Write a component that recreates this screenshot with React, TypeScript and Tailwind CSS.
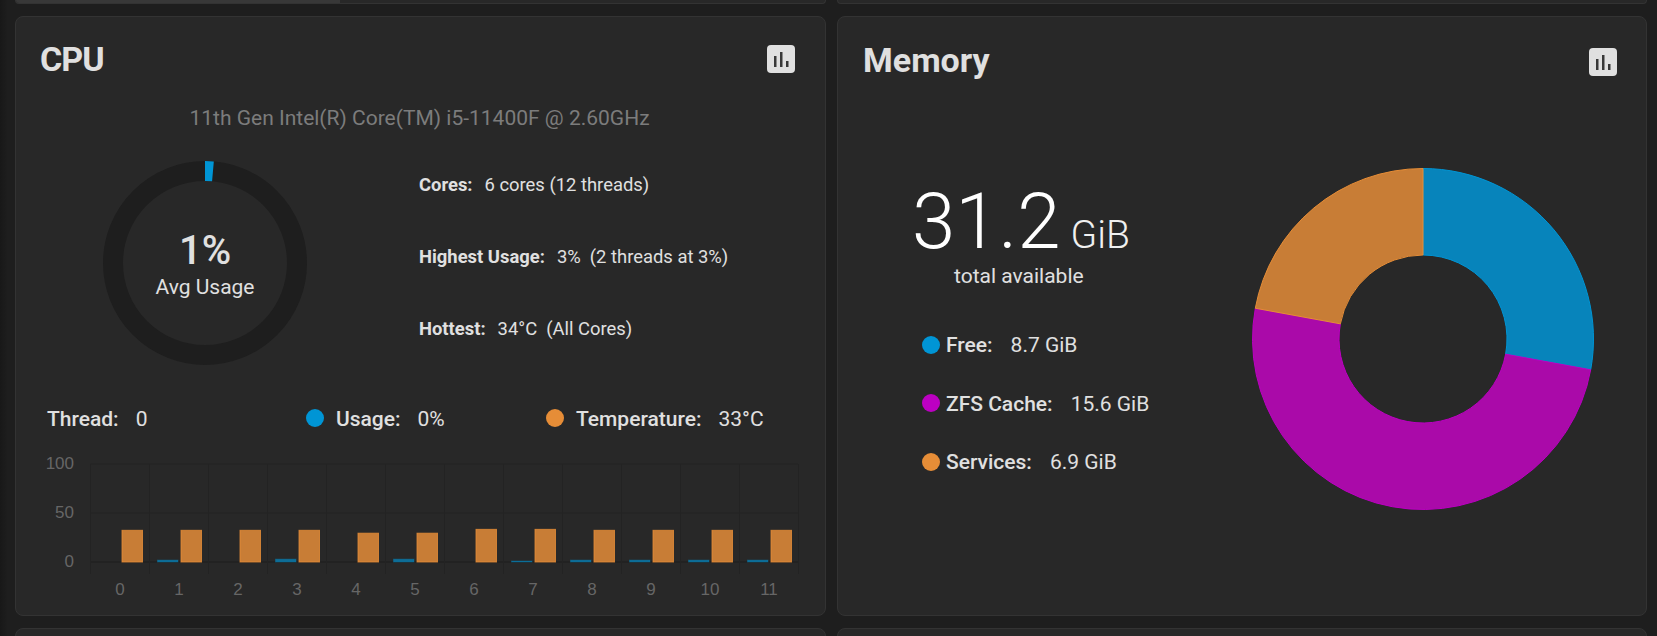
const threads = [
  { usage: 0, temp: 33 },
  { usage: 2, temp: 33 },
  { usage: 0, temp: 33 },
  { usage: 3, temp: 33 },
  { usage: 0, temp: 30 },
  { usage: 3, temp: 30 },
  { usage: 0, temp: 34 },
  { usage: 1, temp: 34 },
  { usage: 2, temp: 33 },
  { usage: 2, temp: 33 },
  { usage: 2, temp: 33 },
  { usage: 2, temp: 33 },
];

function ReportsButton() {
  return (
    <button className="w-[28px] h-[28px] rounded-[4px] bg-[#e0e0e0] flex items-center justify-center shrink-0">
      <svg width="28" height="28" viewBox="0 0 28 28">
        <rect x="7" y="11" width="2.5" height="11" fill="#383838" />
        <rect x="13" y="7" width="2.5" height="15" fill="#383838" />
        <rect x="19" y="16" width="2.5" height="6" fill="#383838" />
      </svg>
    </button>
  );
}

function Gauge() {
  const r = 92;
  const c = 2 * Math.PI * r;
  return (
    <div className="relative w-[204px] h-[204px] shrink-0 ml-[63px]">
      <svg width="204" height="204" viewBox="0 0 204 204">
        <circle cx="102" cy="102" r={r} fill="none" stroke="#1e1e1e" strokeWidth="20" />
        <circle
          cx="102"
          cy="102"
          r={r}
          fill="none"
          stroke="#0095d5"
          strokeWidth="20"
          strokeDasharray={`${c * 0.014} ${c}`}
          transform="rotate(-90 102 102)"
        />
      </svg>
      <div className="absolute inset-0 flex flex-col items-center justify-center text-[#e0e0e0] pt-[3px]">
        <div className="text-[40px] leading-[44px] font-medium">1%</div>
        <div className="text-[21px] leading-[26px] mt-[1px]">Avg Usage</div>
      </div>
    </div>
  );
}

function Stat({ label, value }: { label: string; value: string }) {
  return (
    <div className="h-[24px] leading-[24px] text-[18.4px] text-[#e0e0e0] whitespace-pre">
      <span className="font-bold">{label}</span>
      <span className="ml-[12px]">{value}</span>
    </div>
  );
}

function ThreadChart() {
  const left = 90.5;
  const step = 59;
  const y0 = 562;
  const scale = 0.96;
  return (
    <svg className="block -ml-[24px]" width="808" height="165" viewBox="16 450 808 165">
      {[464, 513, 562].map((y) => (
        <line key={y} x1={left} x2={798} y1={y} y2={y} stroke={y === 562 ? "#1c1c1c" : "#232323"} />
      ))}
      {Array.from({ length: 13 }).map((_, i) => (
        <line key={i} x1={left + i * step} x2={left + i * step} y1={464} y2={574} stroke="#232323" />
      ))}
      {[
        ["100", 464],
        ["50", 513],
        ["0", 562],
      ].map(([t, y]) => (
        <text key={t} x={74} y={Number(y) + 5} textAnchor="end" fontSize="17" fill="#666666" fontFamily="Liberation Sans">
          {t}
        </text>
      ))}
      {threads.map((t, i) => {
        const x = left + i * step;
        const uh = t.usage * scale;
        const th = t.temp * scale;
        return (
          <g key={i}>
            {t.usage > 0 && (
              <rect x={x + 8} y={y0 - uh} width={20.5} height={uh} fill="#0784bb" opacity="0.75" stroke="#0095d5" strokeOpacity="0.4" strokeWidth="1" />
            )}
            <rect x={x + 31.5} y={y0 - th} width={20.5} height={th} fill="#c87d36" stroke="#e68d37" strokeOpacity="0.8" strokeWidth="1" />
            <text x={x + 29.5} y={595} textAnchor="middle" fontSize="17" fill="#666666" fontFamily="Liberation Sans">
              {i}
            </text>
          </g>
        );
      })}
    </svg>
  );
}

function CpuCard() {
  return (
    <div className="h-[600px] rounded-[8px] border border-[#333333] bg-[#282828] px-[24px] pt-[28px] overflow-hidden">
      <div className="flex items-center justify-between h-[28px] pr-[6px]">
        <h2 className="text-[34px] font-bold leading-[28px] tracking-[-1px] text-[#e0e0e0]">CPU</h2>
        <ReportsButton />
      </div>
      <div className="mt-[33px] h-[24px] leading-[24px] text-center text-[21px] text-[#7c7c7c] pr-[2px]">
        11th Gen Intel(R) Core(TM) i5-11400F @ 2.60GHz
      </div>
      <div className="mt-[31px] flex h-[204px]">
        <Gauge />
        <div className="ml-[112px] pt-[12px] flex flex-col gap-[48px]">
          <Stat label="Cores:" value="6 cores (12 threads)" />
          <Stat label="Highest Usage:" value={"3%  (2 threads at 3%)"} />
          <Stat label="Hottest:" value={"34°C  (All Cores)"} />
        </div>
      </div>
      <div className="mt-[43px] flex items-center h-[24px] text-[21px] text-[#e0e0e0] whitespace-pre">
        <span className="ml-[7px] w-[259px]">
          <span className="font-medium">Thread:</span>
          <span className="ml-[17px]">0</span>
        </span>
        <span className="w-[18px] h-[18px] rounded-full bg-[#0095d5] mb-[4px]" />
        <span className="ml-[12px] w-[210px]">
          <span className="font-medium">Usage:</span>
          <span className="ml-[17px]">0%</span>
        </span>
        <span className="w-[18px] h-[18px] rounded-full bg-[#e68d37] mb-[4px]" />
        <span className="ml-[12px]">
          <span className="font-medium">Temperature:</span>
          <span className="ml-[17px]">33°C</span>
        </span>
      </div>
      <div className="mt-[18px]">
        <ThreadChart />
      </div>
    </div>
  );
}

function polar(r: number, deg: number) {
  const a = ((deg - 90) * Math.PI) / 180;
  return `${171 + r * Math.cos(a)} ${171 + r * Math.sin(a)}`;
}

function slice(from: number, to: number) {
  const large = to - from > 180 ? 1 : 0;
  return `M${polar(170.5, from)} A170.5 170.5 0 ${large} 1 ${polar(170.5, to)} L${polar(84, to)} A84 84 0 ${large} 0 ${polar(84, from)} Z`;
}

const memory = [
  { label: "Free:", value: "8.7 GiB", dot: "bg-[#0095d5]" },
  { label: "ZFS Cache:", value: "15.6 GiB", dot: "bg-[#bc00c2]" },
  { label: "Services:", value: "6.9 GiB", dot: "bg-[#e68d37]" },
];

function MemoryCard() {
  return (
    <div className="h-[600px] rounded-[8px] border border-[#333333] bg-[#282828] px-[25px] pt-[31px] overflow-hidden">
      <div className="flex items-center justify-between h-[28px] pr-[4px]">
        <h2 className="text-[34px] font-bold leading-[28px] text-[#e0e0e0] -mt-[4px]">Memory</h2>
        <ReportsButton />
      </div>
      <div className="flex mt-[116px]">
        <div className="w-[300px] shrink-0 pl-[59px]">
          <div className="flex items-baseline whitespace-pre text-white font-light h-[60px] leading-[60px]">
            <span className="text-[78px] -ml-[10px]">31.2</span>
            <span className="text-[39px] ml-[10px] text-[#f0f0f0]">GiB</span>
          </div>
          <div className="mt-[12px] h-[24px] leading-[24px] text-[21px] text-[#e0e0e0] ml-[32px]">total available</div>
          <div className="mt-[46px] flex flex-col gap-[34.5px]">
            {memory.map((m) => (
              <div key={m.label} className="flex items-center h-[24px] text-[21px] text-[#e0e0e0] whitespace-pre">
                <span className={`w-[18px] h-[18px] rounded-full ${m.dot} mb-[3px]`} />
                <span className="ml-[6px] font-medium">{m.label}</span>
                <span className="ml-[18px]">{m.value}</span>
              </div>
            ))}
          </div>
        </div>
        <svg className="ml-[89px] -mt-[24px] shrink-0" width="342" height="342" viewBox="0 0 342 342">
          <path d={slice(0, 100.4)} fill="#0784bb" stroke="#0095d5" strokeWidth="1" />
          <path d={slice(100.4, 280.4)} fill="#aa0aa9" stroke="#bc00c2" strokeWidth="1" />
          <path d={slice(280.4, 360)} fill="#c87d36" stroke="#e68d37" strokeWidth="1" />
        </svg>
      </div>
    </div>
  );
}

export default function App() {
  return (
    <div className="relative w-[1657px] h-[636px] overflow-hidden bg-[#1e1e1e] font-['Roboto',sans-serif]">
      <div className="grid grid-cols-[811px_810px] gap-x-[11px] gap-y-[12px] pl-[15px]">
        <div className="h-[4px] rounded-b-[8px] border border-t-0 border-[#333333] bg-[#282828] overflow-hidden">
          <div className="h-full w-[324px] bg-[#383838]" />
        </div>
        <div className="h-[4px] rounded-b-[8px] border border-t-0 border-[#333333] bg-[#282828]" />
        <CpuCard />
        <MemoryCard />
        <div className="h-[20px] rounded-t-[8px] border border-[#333333] bg-[#282828]" />
        <div className="h-[20px] rounded-t-[8px] border border-[#333333] bg-[#282828]" />
      </div>
      <div className="absolute inset-y-0 left-0 w-[8px] bg-gradient-to-r from-black/20 to-transparent" />
    </div>
  );
}
